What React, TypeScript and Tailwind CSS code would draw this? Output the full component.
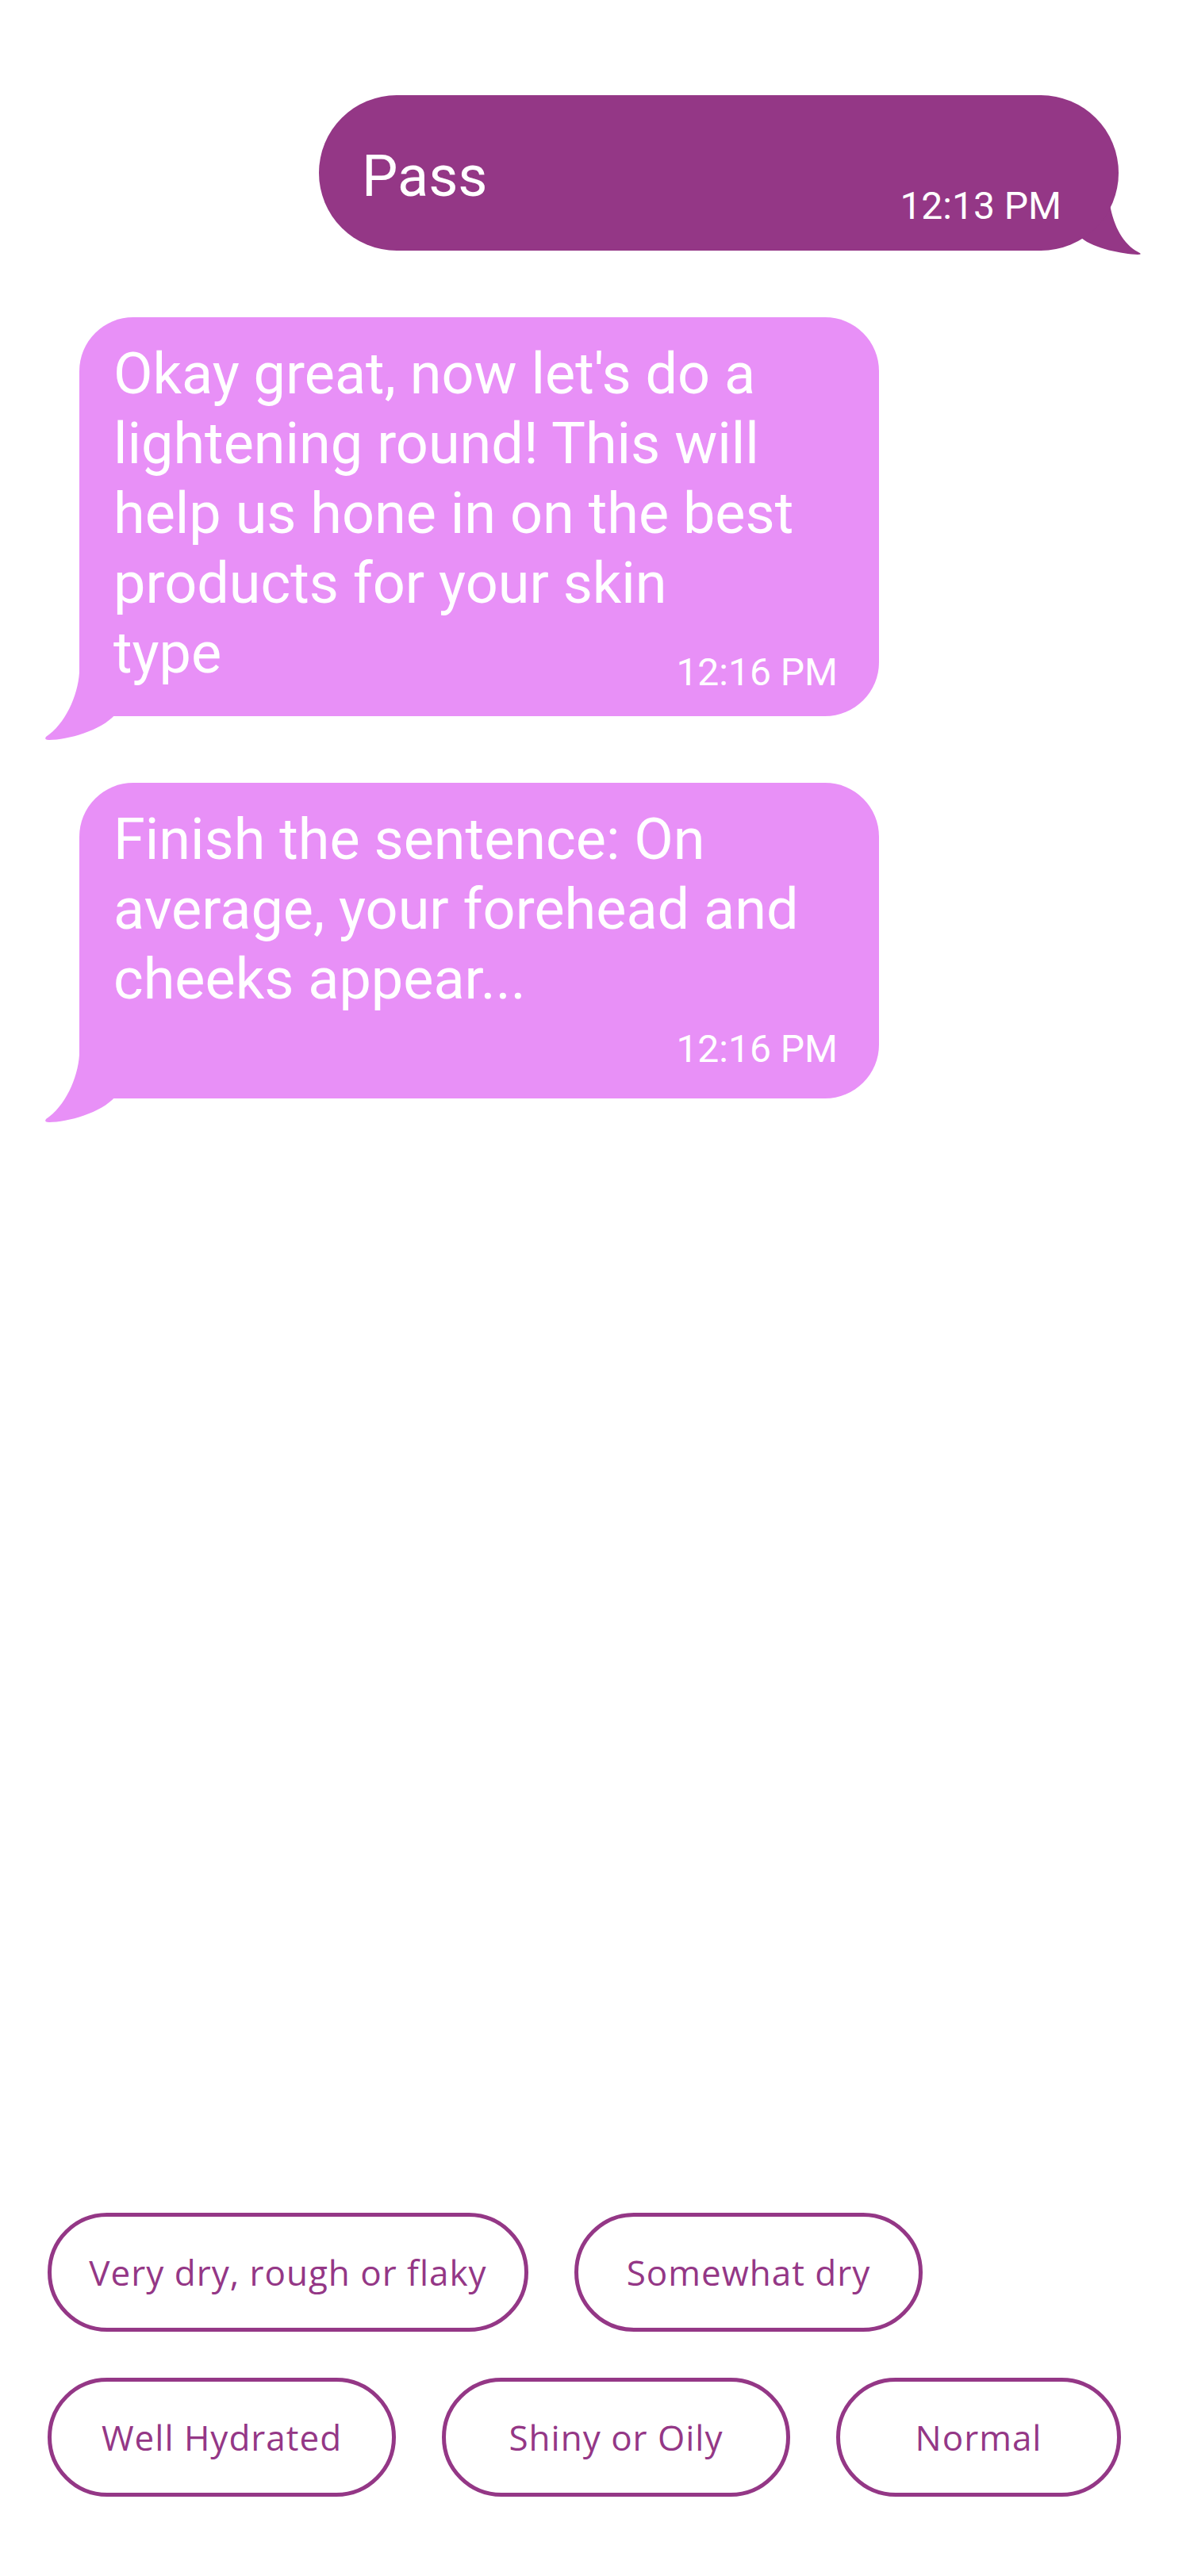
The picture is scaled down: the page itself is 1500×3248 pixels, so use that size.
import React from "react";

const DARK = "#943786";

function LeftTail() {
  return (
    <svg
      className="absolute left-[-50px] bottom-[-40px] w-[110px] h-[110px]"
      viewBox="-50 -70 110 110"
    >
      <path
        d="M 0 -55 C -2 -25, -18 10, -42 26 Q -45 30, -38 30 C -15 30, 28 18, 45 -2 L 45 -60 L 0 -60 Z"
        fill="#e890f7"
      />
    </svg>
  );
}

function RightTail() {
  return (
    <svg
      className="absolute right-[-40px] bottom-[-20px] w-[110px] h-[100px]"
      viewBox="-70 -80 110 100"
    >
      <path
        d="M -11 -58 C -6 -30, 6 -8, 25 2 Q 31 5, 24 5 C 5 4, -30 -2, -47 -16 L -40 -60 Z"
        fill={DARK}
      />
    </svg>
  );
}

function Chip({ label, w }: { label: string; w: string }) {
  return (
    <div
      className={`${w} h-[150px] rounded-full border-[5px] border-[#943786] flex items-center justify-center text-[#943786] text-[44px] tracking-[1px] font-['Open_Sans',sans-serif]`}
    >
      {label}
    </div>
  );
}

export default function App() {
  return (
    <div className="w-[1500px] h-[3248px] bg-white flex flex-col font-['Roboto',sans-serif] text-white">
      <div className="pt-[120px] flex flex-col gap-[84px]">
        {/* Pass bubble */}
        <div className="self-end mr-[90px] w-[1008px] h-[196px] relative">
          <RightTail />
          <div className="relative w-full h-full rounded-full bg-[#943786] pl-[54px] pr-[72px] pt-[59px]">
            <div className="text-[72px] leading-[88px]">Pass</div>
            <div className="text-right text-[48px] leading-[54px] mt-[-34px]">12:13 PM</div>
          </div>
        </div>

        {/* Bubble 1 */}
        <div className="ml-[100px] w-[1008px] relative">
          <LeftTail />
          <div className="relative rounded-[68px] rounded-bl-none bg-[#e890f7] pl-[43px] pr-[52px] pt-[28px] pb-[28px]">
            <div className="text-[72px] leading-[88px] whitespace-nowrap">
              <div>Okay great, now let's do a</div>
              <div>lightening round! This will</div>
              <div>help us hone in on the best</div>
              <div>products for your skin</div>
              <div>type</div>
            </div>
            <div className="text-right text-[48px] leading-[54px] mt-[-47px]">12:16 PM</div>
          </div>
        </div>

        {/* Bubble 2 */}
        <div className="ml-[100px] w-[1008px] relative">
          <LeftTail />
          <div className="relative rounded-[68px] rounded-bl-none bg-[#e890f7] pl-[43px] pr-[52px] pt-[28px] pb-[35px]">
            <div className="text-[72px] leading-[88px] whitespace-nowrap">
              <div>Finish the sentence: On</div>
              <div>average, your forehead and</div>
              <div>cheeks appear...</div>
            </div>
            <div className="text-right text-[48px] leading-[54px] mt-[17px]">12:16 PM</div>
          </div>
        </div>
      </div>

      <div className="mt-auto pl-[60px] pb-[100px] flex flex-col gap-[58px]">
        <div className="flex gap-[58px]">
          <Chip label="Very dry, rough or flaky" w="w-[606px]" />
          <Chip label="Somewhat dry" w="w-[439px]" />
        </div>
        <div className="flex gap-[58px]">
          <Chip label="Well Hydrated" w="w-[439px]" />
          <Chip label="Shiny or Oily" w="w-[439px]" />
          <Chip label="Normal" w="w-[359px]" />
        </div>
      </div>
    </div>
  );
}
